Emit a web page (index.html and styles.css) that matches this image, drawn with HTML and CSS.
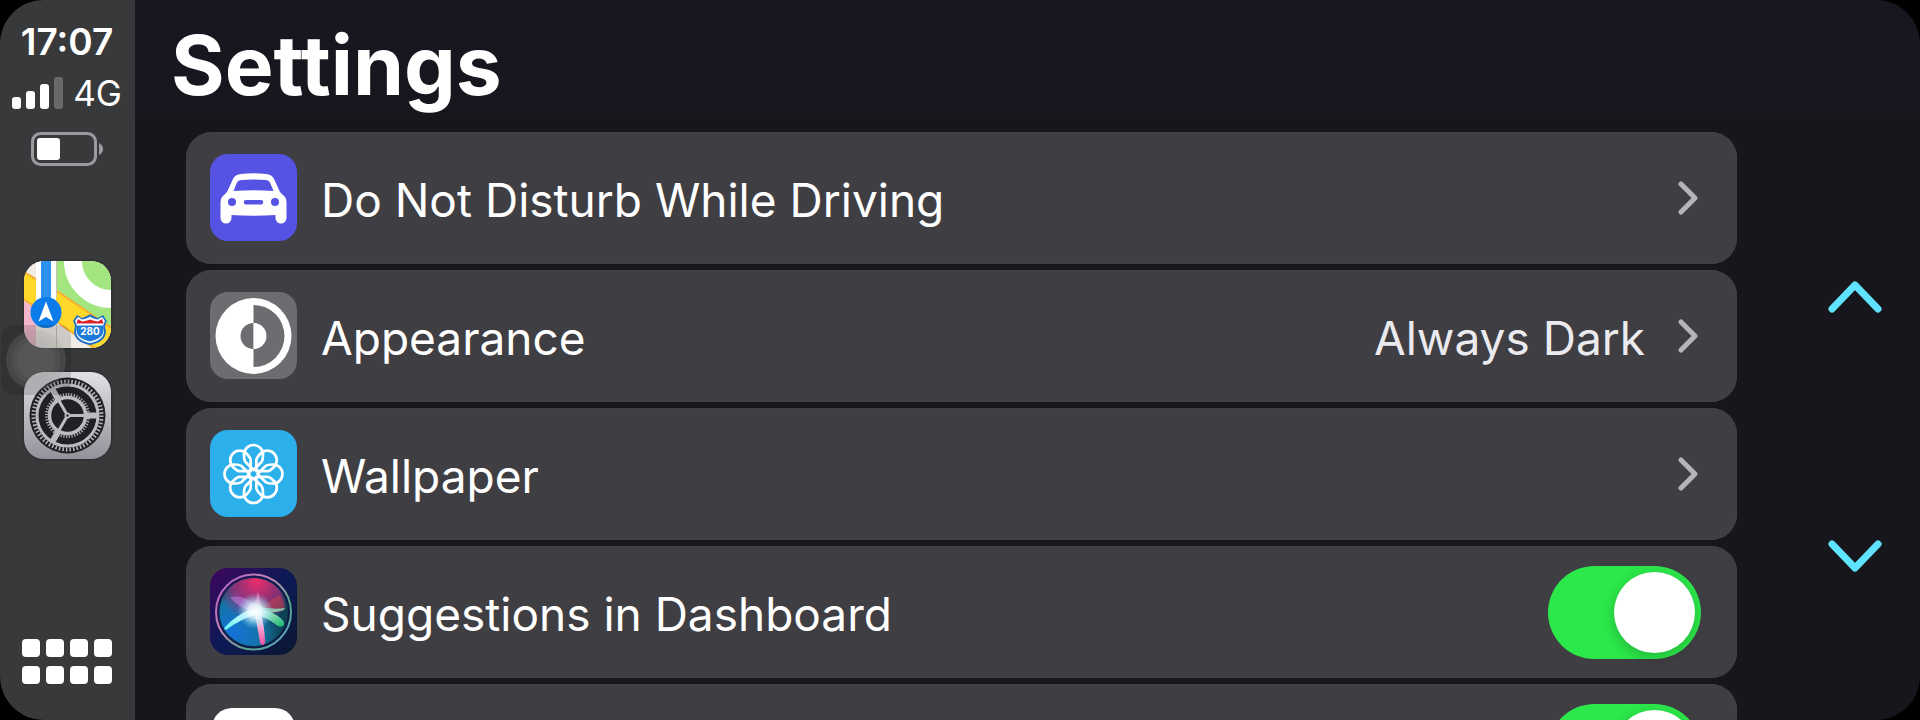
FILE: index.html
```html
<!DOCTYPE html>
<html lang="en">
<head>
    <meta charset="UTF-8">
    <meta name="viewport" content="width=device-width, initial-scale=1.0">
    <title>Settings</title>
    <link rel="stylesheet" href="styles.css">
</head>
<body>

<div class="screen">
    <aside class="sidebar">
        <div class="clock">17:07</div>
        <div class="network">
            <span class="bars"><i></i><i></i><i></i><i class="off"></i></span>
            <span>4G</span>
        </div>
        <svg class="battery" width="72" height="34" viewBox="0 0 72 34">
            <rect x="1.5" y="1.5" width="63" height="31" rx="8" fill="none" stroke="#9b9b9f" stroke-width="3"/>
            <rect x="6" y="6" width="23" height="22" rx="3" fill="#fff"/>
            <path d="M68 11q4 2 4 6t-4 6z" fill="#9b9b9f"/>
        </svg>

        <nav class="dock">
            <a href="#maps" class="app" aria-label="Maps">
                <svg viewBox="0 0 87 87">
                    <rect width="87" height="87" fill="#f1ece6"/>
                    <path d="M0 40l12 7v40H0z" fill="#f3b6cb"/>
                    <path d="M32 0h55v72L32 31z" fill="#a3e57e"/>
                    <circle cx="87" cy="0" r="38" fill="none" stroke="#fff" stroke-width="18"/>
                    <path d="M-2 10L36 32 89 68v25H76L36 63-2 37z" fill="#ffd829"/>
                    <path d="M-2 10L36 32 89 68M-2 37L36 63 76 91" fill="none" stroke="#f8ad2d" stroke-width="2"/>
                    <path d="M12 0h20v48H12z" fill="#fff"/>
                    <path d="M32.500 0v36M32.500 58v29" stroke="#c5c2bc" stroke-width="1"/>
                    <path d="M17 0h10v48H17z" fill="#2b90ee"/>
                    <circle cx="22" cy="51.500" r="15.500" fill="#0b7ce9"/>
                    <path d="M22 40.500l7.500 20L22 56l-7.500 4.500z" fill="#fff"/>
                    <path d="M53 54l5 3q7-3 8-4 1 1 8 4l5-3 4 6q-3 4-1 10 0 11-16 14-16-3-16-14 2-6-1-10z" fill="#2370c8"/>
                    <path d="M54 56l4 2.500q6-1 8-3 2 2 8 3l4-2.500 3 4q-3 5-1 10 0 9-14 12-14-3-14-12 2-5-1-10z" fill="#fff"/>
                    <path d="M54 58l4 2.500q6-1 8-2 2 1 8 2l4-2.500 1.500 4.500h-27z" fill="#d8242b"/>
                    <path d="M52 64.500h28q-1 3-.5 6-1 7-13.500 10-12.500-3-13.500-10 .5-3-.5-6z" fill="#1c7bd9"/>
                    <text class="shield" x="66" y="74" text-anchor="middle">280</text>
                </svg>
            </a>
            <a href="#settings" class="app" aria-label="Settings">
                <svg viewBox="0 0 87 87">
                    <defs>
                        <linearGradient id="steel" x1="0" y1="0" x2="0" y2="1">
                            <stop offset="0" stop-color="#e2e1e6"/>
                            <stop offset="1" stop-color="#93929a"/>
                        </linearGradient>
                    </defs>
                    <rect width="87" height="87" fill="url(#steel)"/>
                    <g transform="translate(43.500 43.500)" fill="none">
                        <circle r="38" fill="#202124"/>
                        <circle r="34" stroke="#b5b4bb" stroke-width="4" stroke-dasharray="1.560 2"/>
                        <circle r="30.500" stroke="#bcbbc1" stroke-width="3"/>
                        <circle r="21" stroke="#a9a8af" stroke-width="3" stroke-dasharray="1.300 1.450"/>
                        <circle r="18" stroke="#bcbbc1" stroke-width="3.500"/>
                        <g stroke="#bcbbc1" stroke-width="3" stroke-linecap="round">
                            <path d="M2 0h27M-1-1.700l-13.500-23.400M-1 1.700l-13.500 23.400"/>
                            <path d="M19 0h9M-9.500-16.500l-4.500-7.800M-9.500 16.500l-4.500 7.800" stroke-width="6"/>
                        </g>
                        <circle r="3" fill="#bcbbc1"/>
                        <circle r="1.300" fill="#333"/>
                    </g>
                </svg>
            </a>
        </nav>

        <button class="home" aria-label="Home">
            <i></i><i></i><i></i><i></i>
            <i></i><i></i><i></i><i></i>
        </button>

        <div class="touch"><span></span></div>
    </aside>

    <main class="main">
        <h1>Settings</h1>

        <div class="content">
            <div class="list">
                <button class="row">
                    <svg class="icon" viewBox="0 0 87 87">
                        <rect width="87" height="87" fill="#5653e4"/>
                        <path fill="#fff" fill-rule="evenodd" d="M31 20q12.500-1.500 25 0 6 .5 8 5l6 13 5 5q1.500 2 1.500 5v16a5.500 5.500 0 0 1-11 0v-3q-22 1.500-44 0v3a5.500 5.500 0 0 1-11 0V48q0-3 1.500-5l5-5 6-13q2-4.500 8-5zM31 26q-3 0-4 2.500L23.500 37q20-1.500 40 0L60 28.500Q59 26 56 26q-12.500-1-25 0zM22 44a4 4 0 1 0 0 8 4 4 0 0 0 0-8zM65 44a4 4 0 1 0 0 8 4 4 0 0 0 0-8zM36 46a2.200 2.200 0 0 0 0 4.500h15a2.200 2.200 0 0 0 0-4.500z"/>
                    </svg>
                    <span class="name">Do Not Disturb While Driving</span>
                    <svg class="chevron" viewBox="0 0 21 34"><path d="M3 3l14 14L3 31"/></svg>
                </button>

                <button class="row">
                    <svg class="icon" viewBox="0 0 87 87">
                        <rect width="87" height="87" fill="#6d6c71"/>
                        <circle cx="43.500" cy="44" r="38" fill="#fff"/>
                        <path d="M43.500 13a31 31 0 0 1 0 62z" fill="#6d6c71"/>
                        <path d="M43.500 31a13 13 0 0 0 0 26z" fill="#6d6c71"/>
                        <path d="M43.500 31a13 13 0 0 1 0 26z" fill="#fff"/>
                    </svg>
                    <span class="name">Appearance</span>
                    <span class="value">Always Dark</span>
                    <svg class="chevron" viewBox="0 0 21 34"><path d="M3 3l14 14L3 31"/></svg>
                </button>

                <button class="row">
                    <svg class="icon" viewBox="0 0 87 87">
                        <defs>
                            <path id="petal" d="M0-4L-8-12Q-9.500-14-9.500-19.500A9.500 9.500 0 0 1 9.500-19.500Q9.500-14 8-12z"/>
                        </defs>
                        <rect width="87" height="87" fill="#2cb0eb"/>
                        <g transform="translate(43.500 44)" fill="none" stroke="#fff" stroke-width="2.700" stroke-linejoin="round">
                            <use href="#petal"/>
                            <use href="#petal" transform="rotate(45)"/>
                            <use href="#petal" transform="rotate(90)"/>
                            <use href="#petal" transform="rotate(135)"/>
                            <use href="#petal" transform="rotate(180)"/>
                            <use href="#petal" transform="rotate(225)"/>
                            <use href="#petal" transform="rotate(270)"/>
                            <use href="#petal" transform="rotate(315)"/>
                            <circle r="5"/>
                        </g>
                    </svg>
                    <span class="name">Wallpaper</span>
                    <svg class="chevron" viewBox="0 0 21 34"><path d="M3 3l14 14L3 31"/></svg>
                </button>

                <label class="row">
                    <svg class="icon" viewBox="0 0 87 87">
                        <defs>
                            <linearGradient id="night" x1="0" y1="0" x2="1" y2="1">
                                <stop offset="0" stop-color="#3f0560"/>
                                <stop offset=".5" stop-color="#0c1a55"/>
                                <stop offset="1" stop-color="#0b1730"/>
                            </linearGradient>
                            <linearGradient id="rim" x1="0" y1="0" x2="1" y2="1">
                                <stop offset="0" stop-color="#b05bc8"/>
                                <stop offset=".4" stop-color="#c58bb0"/>
                                <stop offset=".7" stop-color="#57a88a"/>
                                <stop offset="1" stop-color="#5c9be0"/>
                            </linearGradient>
                            <radialGradient id="pink" cx=".55" cy=".05" r=".6">
                                <stop offset="0" stop-color="#f02c6d"/>
                                <stop offset=".6" stop-color="#b52a80" stop-opacity=".7"/>
                                <stop offset="1" stop-color="#b52a80" stop-opacity="0"/>
                            </radialGradient>
                            <radialGradient id="blue" cx=".2" cy=".8" r=".75">
                                <stop offset="0" stop-color="#1472d8"/>
                                <stop offset=".6" stop-color="#1583bd" stop-opacity=".8"/>
                                <stop offset="1" stop-color="#0f5b68" stop-opacity=".4"/>
                            </radialGradient>
                            <radialGradient id="glow">
                                <stop offset="0" stop-color="#fff"/>
                                <stop offset=".4" stop-color="#e4faff" stop-opacity=".85"/>
                                <stop offset="1" stop-color="#7bdcff" stop-opacity="0"/>
                            </radialGradient>
                            <linearGradient id="teal" x1="0" y1="1" x2="1" y2="0">
                                <stop offset="0" stop-color="#5df3f5"/>
                                <stop offset="1" stop-color="#fff"/>
                            </linearGradient>
                            <linearGradient id="mint" x1="0" y1="0" x2="1" y2="1">
                                <stop offset="0" stop-color="#fff"/>
                                <stop offset="1" stop-color="#10b56b"/>
                            </linearGradient>
                            <linearGradient id="rose" x1="0" y1="0" x2="0" y2="1">
                                <stop offset="0" stop-color="#fff"/>
                                <stop offset="1" stop-color="#ee4fa4"/>
                            </linearGradient>
                        </defs>
                        <rect width="87" height="87" fill="url(#night)"/>
                        <circle cx="43.500" cy="44" r="35" fill="#0d3049"/>
                        <circle cx="43.500" cy="44" r="34" fill="url(#blue)"/>
                        <circle cx="43.500" cy="44" r="34" fill="url(#pink)"/>
                        <path d="M44 44Q28 40 20 29q18-3 30 14z" fill="#c77fe0" opacity=".55"/>
                        <path d="M50 42Q62 30 70 27q8 14 2 16-12 3-22 0z" fill="#c93d55" opacity=".6"/>
                        <path d="M40 44q6-8 8-21 4 14 2 22z" fill="#f56fae" opacity=".8"/>
                        <path d="M46 38q16 4 29 2 0 4-27 6z" fill="#8defcb" opacity=".75"/>
                        <path d="M48 40q20 5 26 14 1 6-6 4Q58 50 45 46z" fill="url(#mint)"/>
                        <path d="M44 42q3 14 6 33 3 4 5 0 0-16-5-33z" fill="url(#rose)"/>
                        <path d="M48 46Q32 50 16 62q-3-1-1-3 10-11 26-18z" fill="url(#teal)"/>
                        <circle cx="45" cy="43" r="18" fill="url(#glow)"/>
                        <circle cx="43.500" cy="44" r="37.500" fill="none" stroke="url(#rim)" stroke-width="2"/>
                    </svg>
                    <span class="name">Suggestions in Dashboard</span>
                    <input type="checkbox" class="toggle" checked>
                </label>

                <div class="row">
                    <svg class="icon" viewBox="0 0 87 87"><rect x="2" y="2" width="83" height="83" rx="20" fill="#fff"/></svg>
                    <span class="name"></span>
                    <input type="checkbox" class="toggle" aria-label="Enabled" checked>
                </div>
            </div>

            <div class="scroll">
                <button aria-label="Scroll up"><svg viewBox="0 0 54 32"><path d="M4 28L27 4l23 24"/></svg></button>
                <button aria-label="Scroll down"><svg viewBox="0 0 54 32"><path d="M4 4l23 24L50 4"/></svg></button>
            </div>
        </div>
    </main>
</div>

</body>
</html>
```
FILE: styles.css
```css
* {
    box-sizing: border-box;
}
body {
    margin: 0;
    overflow: hidden;
    background: #000;
    color: #fff;
    font-family: Inter, "Liberation Sans", sans-serif;
}
button {
    margin: 0;
    padding: 0;
    border: 0;
    background: none;
    color: inherit;
    font: inherit;
    text-align: left;
    cursor: pointer;
}
svg {
    display: block;
}
.screen {
    display: flex;
    height: 100vh;
    border-radius: 44px;
    overflow: hidden;
    background: linear-gradient(#181620, #17161c 160px);
}

/* sidebar */
.sidebar {
    position: relative;
    display: flex;
    flex-direction: column;
    align-items: center;
    flex: 0 0 135px;
    padding: 20px 1px 36px 0;
    background: #38393b;
}
.clock {
    font-size: 37px;
    font-weight: 600;
    line-height: 44px;
}
.network {
    display: flex;
    align-items: center;
    gap: 10px;
    margin-top: 7px;
    font-size: 35px;
    line-height: 44px;
}
.bars {
    display: flex;
    align-items: flex-end;
    gap: 5px;
    height: 32px;
}
.bars i {
    width: 9px;
    height: 12px;
    border-radius: 3px;
    background: #fff;
}
.bars i:nth-child(2) {
    height: 18px;
}
.bars i:nth-child(3) {
    height: 25px;
}
.bars i:nth-child(4) {
    height: 32px;
}
.bars .off {
    background: #69696c;
}
.battery {
    margin-top: 17px;
}
.dock {
    display: flex;
    flex-direction: column;
    gap: 24px;
    margin-top: 95px;
}
.app {
    width: 87px;
    height: 87px;
    border-radius: 20px;
    overflow: hidden;
    box-shadow: 0 0 3px rgba(0, 0, 0, 0.4);
}
.shield {
    fill: #fff;
    font-size: 10px;
    font-weight: 700;
}
.home {
    display: grid;
    grid-template-columns: repeat(4, 18px);
    gap: 9px 6px;
    margin-top: auto;
}
.home i {
    height: 18px;
    border-radius: 4px;
    background: #fff;
}
.touch {
    position: absolute;
    left: 1px;
    top: 325px;
    width: 70px;
    height: 70px;
    padding: 5px;
    border-radius: 12px;
    background: rgba(20, 20, 20, 0.16);
    pointer-events: none;
}
.touch span {
    display: block;
    height: 60px;
    border-radius: 50%;
    background: radial-gradient(circle, rgba(150, 150, 150, 0.36) 19px, rgba(150, 150, 150, 0.28) 20px 24px, rgba(150, 150, 150, 0.2) 25px);
}

/* settings page */
.main {
    display: flex;
    flex-direction: column;
    flex: 1;
    min-width: 0;
}
h1 {
    flex: none;
    margin: 0;
    padding: 18px 36px;
    font-size: 82px;
    font-weight: 700;
    line-height: 96px;
}
.content {
    display: flex;
    flex: 1;
    min-height: 0;
    padding-left: 51px;
}
.list {
    display: flex;
    flex-direction: column;
    flex: 1;
    gap: 6px;
}
.row {
    display: flex;
    align-items: center;
    flex: none;
    height: 132px;
    padding: 0 36px 1px 24px;
    border-radius: 26px;
    background: #3f3e43;
    font-size: 46px;
    line-height: 60px;
    box-shadow: inset 0 0 1px #5a595e;
}
.icon {
    flex: none;
    width: 87px;
    height: 87px;
    border-radius: 18px;
}
.name {
    flex: 1;
    margin-left: 24px;
    padding-top: 4px;
}
.value {
    padding-top: 4px;
    color: #ebebef;
}
.chevron {
    width: 21px;
    height: 34px;
    margin-left: 33px;
    margin-right: 2px;
    fill: none;
    stroke: #b5b4b9;
    stroke-width: 5px;
    stroke-linecap: round;
    stroke-linejoin: round;
}
.toggle {
    appearance: none;
    display: flex;
    align-items: center;
    width: 153px;
    height: 93px;
    margin: 1px 0 0;
    padding: 6px;
    border-radius: 47px;
    background: #6d6c71;
    cursor: pointer;
}
.toggle::before {
    content: "";
    width: 81px;
    height: 81px;
    border-radius: 50%;
    background: #fff;
    box-shadow: 0 4px 14px rgba(0, 0, 0, 0.22);
}
.toggle:checked {
    justify-content: flex-end;
    background: #2ce84a;
}
.scroll {
    display: flex;
    flex-direction: column;
    align-items: center;
    justify-content: center;
    gap: 227px;
    width: 183px;
    padding-left: 52px;
}
.scroll svg {
    width: 54px;
    height: 32px;
    fill: none;
    stroke: #5fe3ff;
    stroke-width: 7px;
    stroke-linecap: round;
    stroke-linejoin: round;
}
```
